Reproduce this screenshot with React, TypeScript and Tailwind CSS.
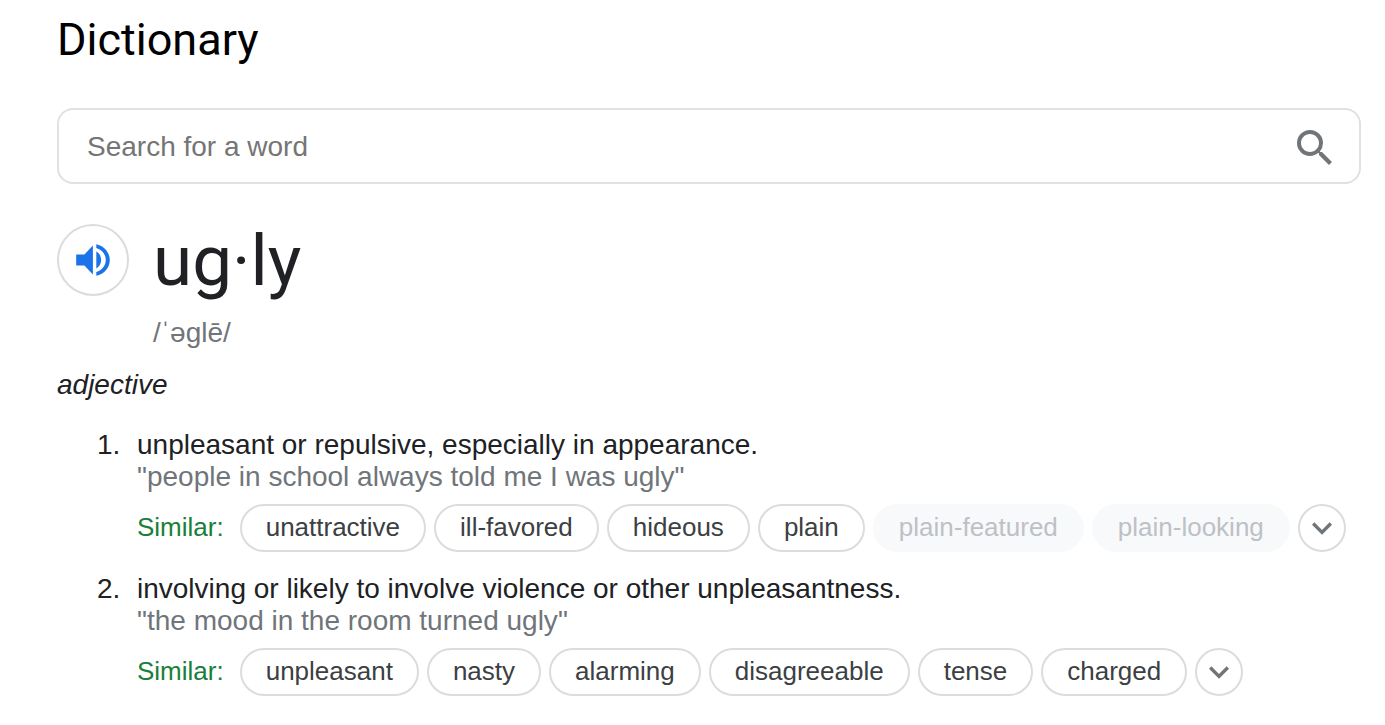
import { MdExpandMore, MdSearch } from "react-icons/md";

interface Synonym {
  word: string;
  muted?: boolean;
}

interface Sense {
  definition: string;
  example: string;
  similar: Synonym[];
}

const senses: Sense[] = [
  {
    definition: "unpleasant or repulsive, especially in appearance.",
    example: "people in school always told me I was ugly",
    similar: [
      { word: "unattractive" },
      { word: "ill-favored" },
      { word: "hideous" },
      { word: "plain" },
      { word: "plain-featured", muted: true },
      { word: "plain-looking", muted: true },
    ],
  },
  {
    definition: "involving or likely to involve violence or other unpleasantness.",
    example: "the mood in the room turned ugly",
    similar: [
      { word: "unpleasant" },
      { word: "nasty" },
      { word: "alarming" },
      { word: "disagreeable" },
      { word: "tense" },
      { word: "charged" },
    ],
  },
];

export default function App() {
  return (
    <main className="min-h-screen bg-white pt-3 pr-6 pb-7 pl-[57px] font-['Liberation_Sans',Arial,sans-serif] text-[28px] leading-8 text-[#202124]">
      <h1 className="font-[Roboto,sans-serif] text-[45px] leading-[56px] text-black">Dictionary</h1>

      <SearchBox />

      <section>
        <div className="mt-10 flex gap-6">
          <button
            type="button"
            aria-label="Listen to pronunciation"
            className="flex size-[72px] shrink-0 items-center justify-center rounded-full border-2 border-[#dadce0] text-[#1a73e8]"
          >
            <SpeakerIcon />
          </button>
          <div>
            <h2 className="font-[Roboto,sans-serif] text-[71px] leading-[74px]">ug·ly</h2>
            <div className="mt-[19px] text-[#70757a]">/ˈəɡlē/</div>
          </div>
        </div>

        <div className="mt-5 italic">adjective</div>

        <ol className="mt-7 flex flex-col gap-[21px] pl-10">
          {senses.map((sense, i) => (
            <SenseItem key={sense.definition} index={i + 1} sense={sense} />
          ))}
        </ol>
      </section>
    </main>
  );
}

function SpeakerIcon() {
  return (
    <svg viewBox="0 0 36 36" fill="currentColor" className="size-9" aria-hidden="true">
      <path d="M1.2 12.4v11.2h8.2l8.5 9V3.4l-8.5 9z" />
      <path d="M21.3 9.6c2.9 1.5 4.8 4.7 4.8 8.4s-1.9 6.9-4.8 8.4z" />
      <path d="M21.3 2.2v3.9c5.5 1.5 9.5 6.3 9.5 11.9s-4 10.4-9.5 11.9v3.9c7.7-1.6 13.5-8 13.5-15.8S29 3.8 21.3 2.2z" />
    </svg>
  );
}

function SearchBox() {
  return (
    <form
      role="search"
      onSubmit={(e) => e.preventDefault()}
      className="mt-10 flex h-[76px] items-center rounded-2xl border-2 border-[#dfe1e5] pr-5 pl-7"
    >
      <input
        type="text"
        aria-label="Search for a word"
        placeholder="Search for a word"
        className="min-w-0 flex-1 pt-0.5 outline-none placeholder:text-[#757575]"
      />
      <button type="submit" aria-label="Search" className="pt-1 text-[#70757a]">
        <MdSearch className="size-12" />
      </button>
    </form>
  );
}

function SenseItem({ index, sense }: { index: number; sense: Sense }) {
  return (
    <li className="flex gap-4">
      <span className="w-6 shrink-0">{index}.</span>
      <div className="min-w-0 flex-1">
        <div>{sense.definition}</div>
        <div className="text-[#70757a]">"{sense.example}"</div>
        <div className="mt-[11px] flex flex-wrap items-center gap-2 text-[26px]">
          <span className="mr-2 pb-0.5 text-[#188038]">Similar:</span>
          {sense.similar.map((s) => (
            <Chip key={s.word} synonym={s} />
          ))}
          <button
            type="button"
            aria-label="Show more similar words"
            className="flex size-12 items-center justify-center rounded-full border-2 border-[#dadce0] text-[#70757a]"
          >
            <MdExpandMore className="size-10" />
          </button>
        </div>
      </div>
    </li>
  );
}

function Chip({ synonym }: { synonym: Synonym }) {
  if (synonym.muted) {
    return (
      <span className="flex h-12 items-center rounded-full bg-[#f8f9fa] px-[26px] pb-0.5 text-[#bdc1c6]">
        {synonym.word}
      </span>
    );
  }
  return (
    <button
      type="button"
      className="flex h-12 items-center rounded-full border-2 border-[#dadce0] px-6 pb-0.5 text-[#3c4043]"
    >
      {synonym.word}
    </button>
  );
}
